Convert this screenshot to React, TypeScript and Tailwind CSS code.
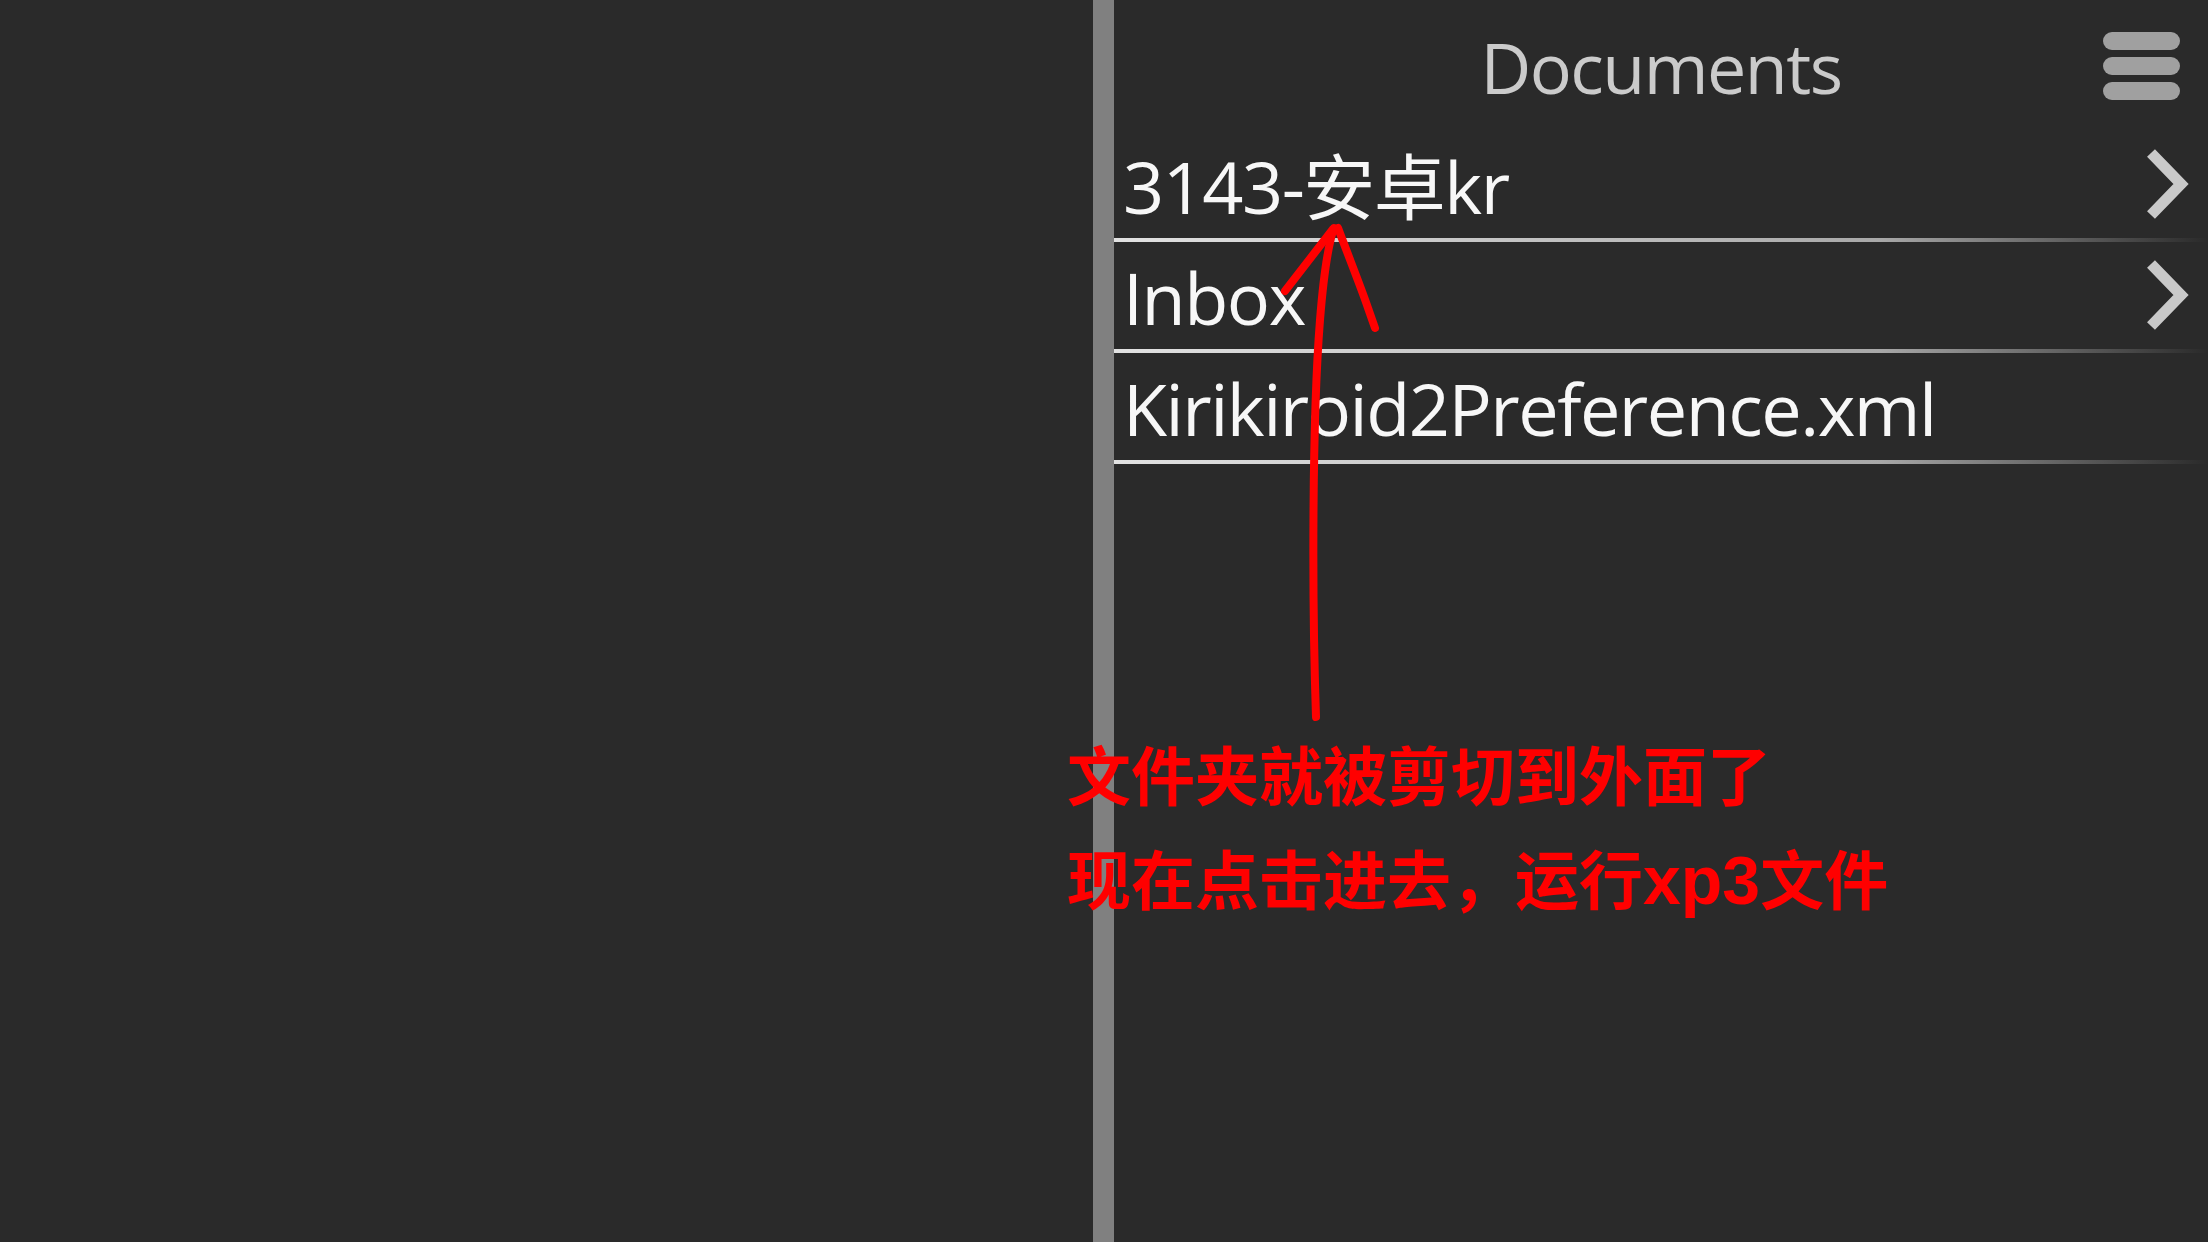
import React from "react";

interface Entry {
    name: string;
    folder: boolean;
}

const entries: Entry[] = [
    { name: "3143-安卓kr", folder: true },
    { name: "Inbox", folder: true },
    { name: "Kirikiroid2Preference.xml", folder: false },
];

const Chevron = () => (
    <svg width="46" height="72" viewBox="0 0 46 72" className="self-center mr-[18px] shrink-0">
        <polyline points="7,5 37,36 7,67" fill="none" stroke="#c9c9c9" strokeWidth="11" strokeLinejoin="miter" />
    </svg>
);

const FileRow: React.FC<{ entry: Entry }> = ({ entry }) => (
    <div className="flex flex-col">
        <div className="h-[107px] flex items-end justify-between pl-[9px] pb-[2px]">
            <span className="text-[72px] leading-[100px] tracking-[-1.5px] text-[#f7f7f7] whitespace-nowrap">{entry.name}</span>
            {entry.folder && <Chevron />}
        </div>
        <div className="h-[4px] w-full bg-linear-to-r from-[#e2e2e2] via-[#a8a8a8] via-70% to-transparent" />
    </div>
);

const App: React.FC = () => {
    return (
        <div
            className="relative w-[2208px] h-[1242px] overflow-hidden flex bg-[#2a2a2a]"
            style={{ fontFamily: '"Open Sans", "Noto Sans CJK SC", sans-serif' }}
        >
            <div className="w-[1093px] h-full bg-[#2a2a2a]" />
            <div className="w-[21px] h-full bg-[#808080]" />
            <div className="flex-1 h-full flex flex-col">
                <div className="relative h-[131px] flex justify-center pt-[17px]">
                    <span className="text-[70px] leading-[100px] tracking-[-1.5px] text-[#cbcbcb]">Documents</span>
                    <div className="absolute right-[28px] top-[32px] flex flex-col gap-[7px]">
                        <div className="w-[77px] h-[18px] rounded-full bg-[#a0a0a0]" />
                        <div className="w-[77px] h-[18px] rounded-full bg-[#a0a0a0]" />
                        <div className="w-[77px] h-[18px] rounded-full bg-[#a0a0a0]" />
                    </div>
                </div>
                {entries.map((e) => (
                    <FileRow key={e.name} entry={e} />
                ))}
            </div>

            {/* red hand annotation */}
            <div className="absolute inset-0 pointer-events-none">
                <svg width="2208" height="1242" className="absolute inset-0">
                    <g fill="none" stroke="#ff0000" strokeWidth="8" strokeLinecap="round" strokeLinejoin="round">
                        <path d="M1316 717 C1312 600, 1312 420, 1320 320 C1324 270, 1328 245, 1334 228" />
                        <path d="M1285 291 L1333 229" />
                        <path d="M1338 228 C1350 260, 1362 290, 1368 308 L1375 328" />
                    </g>
                </svg>
                <div
                    className="absolute left-[1067px] top-[720px] text-[64px] leading-[104px] font-bold text-[#ff0000] whitespace-nowrap"
                    style={{ fontFamily: '"Noto Sans CJK SC", sans-serif' }}
                >
                    <div>文件夹就被剪切到外面了</div>
                    <div>
                        现在点击进去，运行<span className="text-[68px]" style={{ fontFamily: '"Liberation Sans", sans-serif' }}>xp3</span>文件
                    </div>
                </div>
            </div>
        </div>
    );
};

export default App;
